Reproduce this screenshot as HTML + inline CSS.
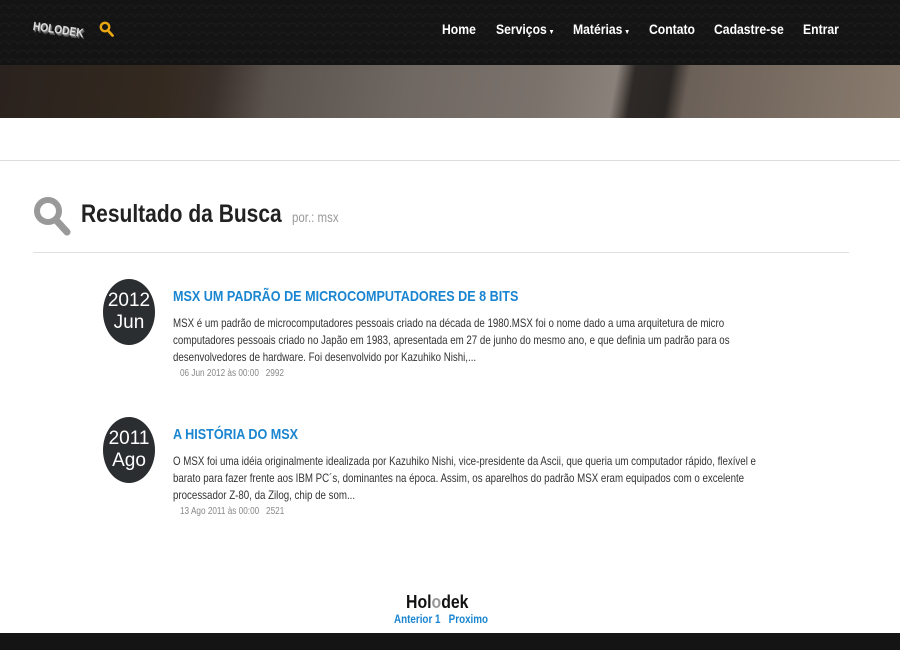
<!DOCTYPE html>
<html><head><meta charset="utf-8"><style>
*{margin:0;padding:0;box-sizing:border-box}
body{width:900px;height:650px;position:relative;background:#fff;font-family:"Liberation Sans",Arial,sans-serif;overflow:hidden}
.a{position:absolute;white-space:nowrap}
.sx{transform-origin:left top;transform:scaleX(.82)}
#hdr{left:0;top:0;width:900px;height:65px;background:#141414;background-image:radial-gradient(circle at 50% 100%,transparent 3px,#1c1c1c 4px,transparent 5px);background-size:9px 9px}
#ban{left:0;top:65px;width:900px;height:53px;background:linear-gradient(100deg,#2a221e 0%,#33291f 18%,#3a302b 24%,#5a524c 30%,#6f6761 45%,#7a726b 60%,#8a817a 68%,#2e2926 70%,#2a2623 74%,#6b6058 76%,#8a7c6e 100%)}
.nav{top:21px;color:#fff;font-weight:bold;font-size:14px;transform-origin:left top;transform:scaleX(.87)}
.circ{width:52px;height:66px;border-radius:50%;background:#2b2e30;color:#fff;text-align:center;font-size:19px;line-height:22px;padding-top:11px}
.ttl{color:#1a85d0;font-weight:bold;font-size:15px}
.txt{color:#333;font-size:12px;line-height:17px}
.meta{color:#888;font-size:10px}
</style></head><body>
<div class="a" id="hdr"></div>
<div class="a" style="left:34px;top:19px;font-weight:bold;font-size:12px;color:#ddd;text-shadow:1px 1px 0 #777,2px 2px 0 #555;transform-origin:left top;transform:rotate(8deg) scaleX(.85)">HOLODEK</div>
<svg class="a" style="left:99px;top:21px" width="16" height="18" viewBox="0 0 16 18"><circle cx="6" cy="6" r="4.2" fill="none" stroke="#e8a611" stroke-width="2.4"/><path d="M9 9.5l4.5 5" stroke="#e8a611" stroke-width="2.8" stroke-linecap="round"/></svg>
<div class="a nav" style="left:442px">Home</div>
<div class="a nav" style="left:496px">Serviços<span style="font-size:7px"> ▼</span></div>
<div class="a nav" style="left:573px">Matérias<span style="font-size:7px"> ▼</span></div>
<div class="a nav" style="left:649px">Contato</div>
<div class="a nav" style="left:714px">Cadastre-se</div>
<div class="a nav" style="left:803px">Entrar</div>
<div class="a" id="ban"></div>
<div class="a" style="left:0;top:160px;width:900px;height:1px;background:#ddd"></div>
<svg class="a" style="left:33px;top:196px" width="40" height="42" viewBox="0 0 40 42"><circle cx="15" cy="15" r="11" fill="none" stroke="#999" stroke-width="6"/><path d="M23 24l11 12" stroke="#999" stroke-width="7" stroke-linecap="round"/></svg>
<div class="a" style="left:81px;top:200px;font-size:25px;color:#222;font-weight:bold;transform-origin:left top;transform:scaleX(.84)">Resultado da Busca</div>
<div class="a sx" style="left:292px;top:209px;font-size:14px;color:#999">por.: msx</div>
<div class="a" style="left:33px;top:252px;width:816px;height:1px;background:#e0e0e0"></div>

<div class="a circ" style="left:103px;top:279px">2012<br>Jun</div>
<div class="a ttl" style="left:173px;top:288px;transform-origin:left top;transform:scaleX(.84)">MSX UM PADRÃO DE MICROCOMPUTADORES DE 8 BITS</div>
<div class="a txt" style="left:173px;top:315px;transform-origin:left top;transform:scaleX(.81)">MSX é um padrão de microcomputadores pessoais criado na década de 1980.MSX foi o nome dado a uma arquitetura de micro<br>computadores pessoais criado no Japão em 1983, apresentada em 27 de junho do mesmo ano, e que definia um padrão para os<br>desenvolvedores de hardware. Foi desenvolvido por Kazuhiko Nishi,...</div>
<div class="a sx meta" style="left:180px;top:368px">06 Jun 2012 às 00:00 &nbsp; 2992</div>

<div class="a circ" style="left:103px;top:417px">2011<br>Ago</div>
<div class="a ttl" style="left:173px;top:426px;transform-origin:left top;transform:scaleX(.84)">A HISTÓRIA DO MSX</div>
<div class="a txt" style="left:173px;top:453px;transform-origin:left top;transform:scaleX(.81)">O MSX foi uma idéia originalmente idealizada por Kazuhiko Nishi, vice-presidente da Ascii, que queria um computador rápido, flexível e<br>barato para fazer frente aos IBM PC´s, dominantes na época. Assim, os aparelhos do padrão MSX eram equipados com o excelente<br>processador Z-80, da Zilog, chip de som...</div>
<div class="a sx meta" style="left:180px;top:506px">13 Ago 2011 às 00:00 &nbsp; 2521</div>

<div class="a" style="left:406px;top:592px;font-size:18px;color:#111;font-weight:bold;transform-origin:left top;transform:scaleX(.88)">Hol<span style="color:#999">o</span>dek</div>
<div class="a" style="left:394px;top:612px;font-size:12px;font-weight:bold;color:#1a85d0;transform-origin:left top;transform:scaleX(.82)">Anterior 1 &nbsp; Proximo</div>
<div class="a" style="left:0;top:633px;width:900px;height:17px;background:#141414"></div>
</body></html>
